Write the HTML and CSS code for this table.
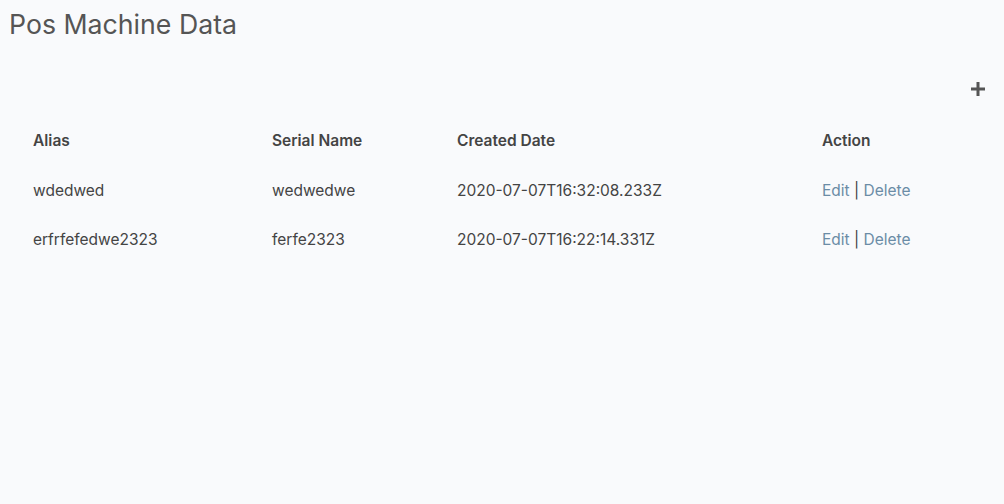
FILE: index.html
```html
<!DOCTYPE html>
<html>
<head>
<meta charset="utf-8">
<link rel="stylesheet" href="styles.css">
</head>
<body>
<div class="page">
  <h1 class="title">Pos Machine Data</h1>
  <div class="toolbar">
    <button class="add" aria-label="Add">
      <svg width="14" height="14" viewBox="0 0 14 14"><path d="M7 0v14M0 7h14" stroke="#555" stroke-width="3"/></svg>
    </button>
  </div>
  <table class="grid">
    <colgroup>
      <col class="c1"><col class="c2"><col class="c3"><col class="c4">
    </colgroup>
    <thead>
      <tr><th>Alias</th><th>Serial Name</th><th>Created Date</th><th>Action</th></tr>
    </thead>
    <tbody>
      <tr><td>wdedwed</td><td>wedwedwe</td><td>2020-07-07T16:32:08.233Z</td><td><a class="lnk">Edit</a> | <a class="lnk">Delete</a></td></tr>
      <tr><td>erfrfefedwe2323</td><td>ferfe2323</td><td>2020-07-07T16:22:14.331Z</td><td><a class="lnk">Edit</a> | <a class="lnk">Delete</a></td></tr>
    </tbody>
  </table>
</div>
</body>
</html>
```
FILE: styles.css
```css
html, body {
  margin: 0;
  padding: 0;
  background: #f9fafc;
}
body {
  font-family: Inter, "Noto Sans", sans-serif;
  color: #444;
  width: 1004px;
  height: 504px;
  overflow: hidden;
}
.page {
  padding: 8px 19px 0 9px;
}
.title {
  margin: 0;
  font-size: 26.7px;
  font-weight: 400;
  line-height: 32px;
  color: #555;
}
.toolbar {
  display: flex;
  justify-content: flex-end;
  margin-top: 42px;
  height: 18px;
}
.add {
  border: 0;
  background: none;
  padding: 0;
  width: 14px;
  height: 14px;
  display: flex;
  cursor: pointer;
}
.grid {
  margin-left: 8px;
  width: 968px;
  border-collapse: collapse;
  table-layout: fixed;
  margin-top: 15px;
  font-size: 15.5px;
}
.c1 { width: 239px; }
.c2 { width: 185px; }
.c3 { width: 365px; }
.c4 { width: 179px; }
.grid th, .grid td {
  text-align: left;
  padding: 0 16px;
  height: 50px;
  white-space: nowrap;
}
.grid tbody tr:last-child td {
  height: 49px;
}
.grid th {
  font-weight: 600;
  color: #444;
}
.grid td {
  font-weight: 400;
  color: #444;
}
.lnk {
  color: #6b8ca6;
  cursor: pointer;
}
```
